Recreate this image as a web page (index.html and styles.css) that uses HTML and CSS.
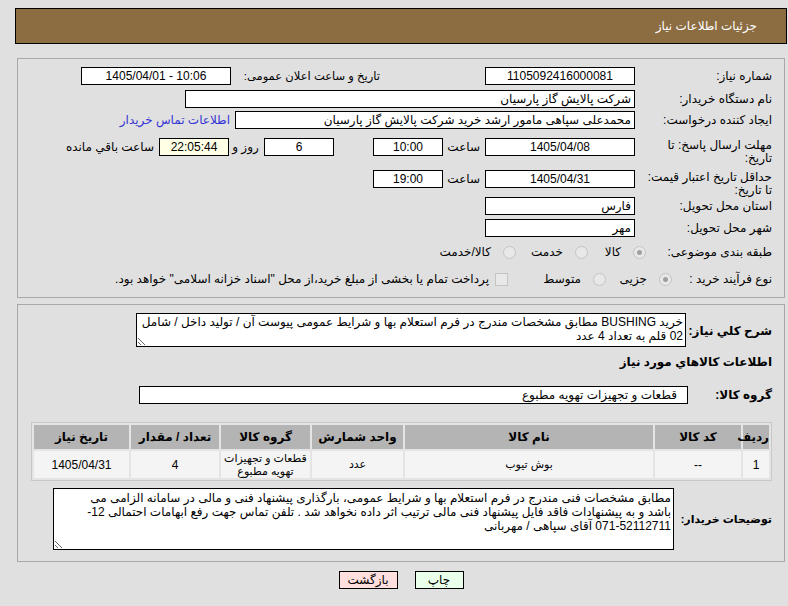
FILE: index.html
```html
<!DOCTYPE html>
<html lang="fa" dir="rtl">
<head>
  <meta charset="UTF-8" />
  <title>جزئیات اطلاعات نیاز</title>
  <link rel="stylesheet" href="styles.css">
</head>
<body>
<div class="page">

  <div class="title-bar">جزئیات اطلاعات نیاز</div>

  <!-- مشخصات اصلی نیاز -->
  <div class="panel info">
    <div class="row r1">
      <div class="label">شماره نیاز:</div>
      <div class="box w150 center">1105092416000081</div>
      <div class="label announce">تاریخ و ساعت اعلان عمومی:</div>
      <div class="box w150 center" dir="ltr">1405/04/01 - 10:06</div>
    </div>

    <div class="row r2">
      <div class="label">نام دستگاه خریدار:</div>
      <div class="box w450">شرکت پالایش گاز پارسیان</div>
    </div>

    <div class="row r3">
      <div class="label">ایجاد کننده درخواست:</div>
      <div class="box w400">محمدعلی سپاهی مامور ارشد خرید شرکت پالایش گاز پارسیان</div>
      <a class="contact" href="#">اطلاعات تماس خریدار</a>
    </div>

    <div class="row r4">
      <div class="label two-line">مهلت ارسال پاسخ: تا<br>تاریخ:</div>
      <div class="box w150 center">1405/04/08</div>
      <div class="word hour">ساعت</div>
      <div class="box w70 center">10:00</div>
      <div class="box w70 center days">6</div>
      <div class="word and">روز و</div>
      <div class="box w70 center remain">22:05:44</div>
      <div class="word left-text">ساعت باقي مانده</div>
    </div>

    <div class="row r5">
      <div class="label two-line">حداقل تاریخ اعتبار قیمت:<br>تا تاریخ:</div>
      <div class="box w150 center">1405/04/31</div>
      <div class="word hour">ساعت</div>
      <div class="box w70 center">19:00</div>
    </div>

    <div class="row r6">
      <div class="label">استان محل تحویل:</div>
      <div class="box w150">فارس</div>
    </div>

    <div class="row r7">
      <div class="label">شهر محل تحویل:</div>
      <div class="box w150">مهر</div>
    </div>

    <div class="row r8">
      <div class="label narrow8">طبقه بندی موضوعی:</div>
      <div class="option o1"><span class="radio checked"></span><span>کالا</span></div>
      <div class="option o2"><span class="radio"></span><span>خدمت</span></div>
      <div class="option"><span class="radio"></span><span>کالا/خدمت</span></div>
    </div>

    <div class="row r9">
      <div class="label narrow9">نوع فرآیند خرید :</div>
      <div class="option o3"><span class="radio checked"></span><span>جزیی</span></div>
      <div class="option o4"><span class="radio"></span><span>متوسط</span></div>
      <div class="option"><span class="check"></span><span>پرداخت تمام یا بخشی از مبلغ خرید،از محل "اسناد خزانه اسلامی" خواهد بود.</span></div>
    </div>
  </div>

  <!-- شرح و کالاها -->
  <div class="panel details">
    <div class="row desc-row">
      <div class="label bold need-label">شرح کلي نیاز:</div>
      <textarea class="text-area need" readonly>خرید BUSHING مطابق مشخصات مندرج در فرم استعلام بها و شرایط عمومی پیوست آن / تولید داخل / شامل
02 قلم به تعداد 4 عدد</textarea>
    </div>

    <div class="section-title">اطلاعات کالاهاي مورد نیاز</div>

    <div class="row group-row">
      <div class="label bold group-label">گروه کالا:</div>
      <div class="box group-box">قطعات و تجهیزات تهویه مطبوع</div>
    </div>

    <table class="items">
      <colgroup>
        <col style="width: 26px">
        <col style="width: 86px">
        <col style="width: 248px">
        <col style="width: 91px">
        <col style="width: 89px">
        <col style="width: 88px">
        <col>
      </colgroup>
      <thead>
        <tr>
          <th>ردیف</th>
          <th>کد کالا</th>
          <th>نام کالا</th>
          <th>واحد شمارش</th>
          <th>گروه کالا</th>
          <th>تعداد / مقدار</th>
          <th>تاریخ نیاز</th>
        </tr>
      </thead>
      <tbody>
        <tr>
          <td>1</td>
          <td>--</td>
          <td class="small">بوش تیوب</td>
          <td class="small">عدد</td>
          <td class="small">قطعات و تجهیزات<br>تهویه مطبوع</td>
          <td>4</td>
          <td>1405/04/31</td>
        </tr>
      </tbody>
    </table>

    <div class="row buyer-row">
      <div class="label bold buyer-label">توضیحات خریدار:</div>
      <textarea class="text-area buyer" readonly>مطابق مشخصات فنی مندرج در فرم استعلام بها و شرایط عمومی، بارگذاری پیشنهاد فنی و مالی در سامانه الزامی می
باشد و به پیشنهادات فاقد فایل پیشنهاد فنی مالی ترتیب اثر داده نخواهد شد . تلفن تماس جهت رفع ابهامات احتمالی 12-
071-52112711 آقای سپاهی / مهربانی</textarea>
    </div>
  </div>

  <div class="buttons">
    <button class="btn print">چاپ</button>
    <button class="btn back">بازگشت</button>
  </div>

</div>
</body>
</html>
```

FILE: styles.css
```css
body {
  margin: 0;
  background: #e0e0e0;
  font-family: "Liberation Sans", "DejaVu Sans", sans-serif;
  font-size: 12px;
  color: #000;
}

.page {
  padding: 8px 1px 0 15px;
}

.title-bar {
  height: 34px;
  line-height: 34px;
  background: #8c6d42;
  border: 1px solid #000;
  color: #fff;
  padding-right: 29px;
}

.panel {
  margin: 14px 2px 0 2px;
  border: 1px solid #a8a8a8;
  padding-right: 12px;
}

.info {
  padding-top: 8px;
  padding-bottom: 9px;
}

.row {
  display: flex;
  align-items: flex-start;
}

.r1 { height: 23px; }
.r2 { height: 21px; }
.r3 { height: 27px; }
.r4 { height: 32px; }
.r5 { height: 27px; }
.r6 { height: 22px; }
.r7 { height: 24px; }
.r8 { height: 27px; }
.r9 { height: 18px; }

.label {
  width: 131px;
  margin-left: 6px;
  line-height: 18px;
  flex-shrink: 0;
}

.label.two-line {
  line-height: 13px;
  padding-top: 1px;
}

.label.announce {
  width: 142px;
  margin-right: 105px;
  margin-left: 7px;
  font-size: 11.5px;
  white-space: nowrap;
}

.box {
  height: 16px;
  line-height: 16px;
  border: 1px solid #000;
  background: #fff;
  padding: 0 3px;
  white-space: nowrap;
  overflow: hidden;
  flex-shrink: 0;
}

.center {
  text-align: center;
}

.w150 { width: 142px; }
.w450 { width: 442px; }
.w400 { width: 392px; }
.w70 { width: 62px; }

.contact {
  margin-right: 5px;
  line-height: 18px;
  color: #3434d4;
  text-decoration: none;
}

.word {
  line-height: 18px;
  white-space: nowrap;
  flex-shrink: 0;
}

.hour {
  width: 32px;
  margin: 0 5px;
  text-align: center;
}

.days {
  margin-right: 39px;
}

.and {
  width: 31px;
  margin: 0 3px 0 1px;
  text-align: center;
}

.remain {
  background: #ffffe6;
}

.left-text {
  margin-right: 5px;
}

/* رادیوها */
.narrow8 { width: 125px; margin-left: 1px; }
.narrow9 { width: 100px; margin-left: 0; }

.option {
  display: flex;
  align-items: center;
  gap: 12px;
  line-height: 18px;
  flex-shrink: 0;
}

.o1 { width: 58px; }
.o2 { width: 72px; }
.o3 { width: 66px; }
.o4 { width: 98px; }

.radio {
  width: 11px;
  height: 11px;
  border-radius: 50%;
  border: 1px solid #c4c4c4;
  background: #e8e8e8;
  flex-shrink: 0;
  position: relative;
}

.radio.checked::after {
  content: "";
  position: absolute;
  left: 3px;
  top: 3px;
  width: 5px;
  height: 5px;
  border-radius: 50%;
  background: #a0a0a0;
}

.check {
  width: 11px;
  height: 11px;
  border: 1px solid #c4c4c4;
  background: #e8e8e8;
  flex-shrink: 0;
  margin-left: -6px;
}

/* بخش دوم */
.details {
  margin-top: 6px;
  padding-top: 8px;
  padding-bottom: 11px;
}

.bold {
  font-weight: bold;
  white-space: nowrap;
}

.need-label {
  width: 84px;
  margin-left: 2px;
  padding-top: 9px;
}

.text-area {
  display: block;
  box-sizing: border-box;
  border: 1px solid #000;
  background: #fff;
  font-family: "Liberation Sans", "DejaVu Sans", sans-serif;
  font-size: 12px;
  line-height: 14px;
  padding: 1px 2px;
  margin: 0;
  resize: both;
  overflow: hidden;
  white-space: pre;
  color: #000;
}

.need {
  width: 550px;
  height: 34px;
}

.section-title {
  font-weight: bold;
  line-height: 18px;
  margin-top: 6px;
}

.group-row {
  margin-top: 15px;
}

.group-label {
  width: 84px;
  margin-left: 0;
}

.group-box {
  width: 537px;
  padding: 0 10px 0 0;
}

.items {
  margin: 18px 0 0 12px;
  width: 741px;
  table-layout: fixed;
  border: 1px solid #c8c8c8;
  border-spacing: 2px;
  background: #e4e4e4;
}

.items th {
  background: #b4b4b4;
  height: 24px;
  padding: 0;
  font-weight: bold;
}

.items td {
  background: #f4f4f4;
  height: 27px;
  padding: 0;
  text-align: center;
}

.items td.small {
  font-size: 11px;
  line-height: 13px;
  white-space: nowrap;
}

.buyer-row {
  margin-top: 7px;
}

.buyer-label {
  width: 97px;
  margin-left: 1px;
  padding-top: 22px;
  font-size: 11px;
}

.buyer {
  width: 621px;
  height: 62px;
  padding-top: 2px;
}

.buttons {
  display: flex;
  justify-content: center;
  gap: 17px;
  margin-top: 9px;
}

.btn {
  height: 18px;
  padding: 0;
  border: 1px solid #000;
  font-family: "Liberation Sans", "DejaVu Sans", sans-serif;
  font-size: 12px;
  line-height: 16px;
  color: #000;
}

.print {
  width: 49px;
  background: #eaffea;
}

.back {
  width: 59px;
  background: #ffdede;
}
```
